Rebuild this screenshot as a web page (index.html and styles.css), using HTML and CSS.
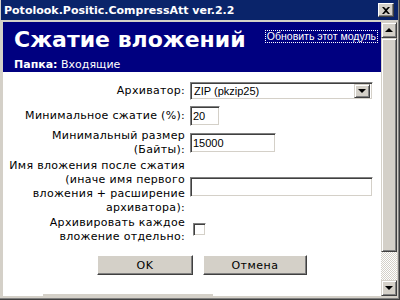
FILE: index.html
```html
<!DOCTYPE html>
<html>
<head>
    <title>Potolook.Positic.CompressAtt ver.2.2</title>
    <link rel="stylesheet" href="styles.css">
</head>
<body>
    <div class="window">
        <div class="titlebar">
            <span class="caption">Potolook.Positic.CompressAtt ver.2.2</span>
            <span class="close-btn">
                <svg width="8" height="7" viewBox="0 0 8 7"><path d="M0 0h2l2 2 2-2h2L5 3.5 8 7H6L4 5 2 7H0l3-3.5z" fill="#000"/></svg>
            </span>
        </div>
        <div class="client">
            <div class="page">
                <div class="header">
                    <div class="header-top">
                        <h1>Сжатие вложений</h1>
                        <a class="update-link" href="#">Обновить этот модуль</a>
                    </div>
                    <div class="folder"><b>Папка:</b> Входящие</div>
                </div>

                <form class="settings">
                    <label for="archiver">Архиватор:</label>
                    <div class="cell">
                        <div class="combo">
                            <select id="archiver">
                                <option>ZIP (pkzip25)</option>
                            </select>
                            <span class="combo-btn"><span class="arrow-down"></span></span>
                        </div>
                    </div>

                    <label for="minRatio">Минимальное сжатие (%):</label>
                    <div class="cell"><input type="text" id="minRatio" class="field field-tiny" value="20"></div>

                    <label for="minSize">Минимальный размер<br>(Байты):</label>
                    <div class="cell"><input type="text" id="minSize" class="field field-short" value="15000"></div>

                    <label for="attName">Имя вложения после сжатия<br>(иначе имя первого<br>вложения + расширение<br>архиватора):</label>
                    <div class="cell"><input type="text" id="attName" class="field field-long" value=""></div>

                    <label for="separate">Архивировать каждое<br>вложение отдельно:</label>
                    <div class="cell"><input type="checkbox" id="separate" class="check"></div>
                </form>

                <div class="actions">
                    <button class="btn">OK</button>
                    <button class="btn btn-wide">Отмена</button>
                </div>
                <div class="footer-line"></div>
            </div>

            <div class="scrollbar">
                <span class="sb-btn"><span class="arrow-up"></span></span>
                <span class="sb-thumb"></span>
                <span class="sb-track"></span>
                <span class="sb-btn"><span class="arrow-down"></span></span>
            </div>
        </div>
    </div>
</body>
</html>
```

FILE: styles.css
```css
body {
    margin: 0;
    font-family: "DejaVu Sans", Verdana, sans-serif;
    font-size: 11px;
}
.window {
    width: 400px;
    height: 300px;
    box-sizing: border-box;
    background-color: #d4d0c8;
    border-right: 1px solid #404040;
    border-bottom: 1px solid #404040;
    box-shadow: inset -1px -1px #808080;
    display: flex;
    flex-direction: column;
}
.titlebar {
    height: 20px;
    margin: 0 1px 0 1px;
    background-color: #0a246a;
    display: flex;
    align-items: center;
    justify-content: space-between;
    padding: 0 4px 0 3px;
}
.caption {
    color: #fff;
    font-family: "DejaVu Sans", Verdana, sans-serif;
    font-weight: bold;
    font-size: 11px;
}
.close-btn {
    width: 16px;
    height: 14px;
    box-sizing: border-box;
    background-color: #d4d0c8;
    border: 1px solid;
    border-color: #fff #404040 #404040 #fff;
    box-shadow: inset -1px -1px #808080;
    display: flex;
    align-items: center;
    justify-content: center;
}
.client {
    flex: 1;
    margin: 2px 2px 3px 3px;
    display: flex;
    overflow: hidden;
}
.page {
    flex: 1;
    background-color: #fff;
    overflow: hidden;
}
.header {
    background-color: #000080;
    color: #fff;
    height: 50px;
    padding: 4px 4px 0 11px;
    box-sizing: border-box;
}
.header-top {
    display: flex;
    justify-content: space-between;
    align-items: flex-start;
}
h1 {
    margin: 0;
    font-size: 22px;
    line-height: 28px;
    font-weight: bold;
    white-space: nowrap;
}
.update-link {
    color: #fff;
    text-decoration: none;
    font-family: "Liberation Sans", Arial, sans-serif;
    font-size: 10.5px;
    line-height: 11px;
    margin-top: 5px;
    outline: 1px dotted #fff;
    padding: 0 1px;
    white-space: nowrap;
}
.folder {
    margin-top: 4px;
    line-height: 14px;
}
.settings {
    margin-top: 6px;
    display: grid;
    grid-template-columns: 182px auto;
    grid-template-rows: 26px 24px 30px 58px 28px;
    column-gap: 5px;
}
.settings label {
    text-align: right;
    line-height: 14px;
    align-self: center;
    letter-spacing: 0.3px;
    white-space: nowrap;
}
.cell {
    display: flex;
    align-items: center;
}
.combo {
    width: 183px;
    height: 18px;
    box-sizing: border-box;
    border: 1px solid;
    border-color: #808080 #fff #fff #808080;
    box-shadow: inset 1px 1px #404040, inset -1px -1px #d4d0c8;
    display: flex;
    align-items: center;
    padding: 1px 2px 1px 1px;
    background-color: #fff;
}
.combo select {
    flex: 1;
    appearance: none;
    border: none;
    background: transparent;
    font-family: "Liberation Sans", Arial, sans-serif;
    font-size: 11px;
    padding: 0 2px;
    outline: none;
}
.combo-btn,
.sb-btn {
    box-sizing: border-box;
    background-color: #d4d0c8;
    border: 1px solid;
    border-color: #d4d0c8 #404040 #404040 #d4d0c8;
    box-shadow: inset 1px 1px #fff, inset -1px -1px #808080;
    display: flex;
    align-items: center;
    justify-content: center;
}
.combo-btn {
    width: 16px;
    height: 14px;
}
.arrow-down,
.arrow-up {
    width: 0;
    height: 0;
    border-left: 4px solid transparent;
    border-right: 4px solid transparent;
}
.arrow-down {
    border-top: 4px solid #000;
}
.arrow-up {
    border-bottom: 4px solid #000;
}
.field,
.check {
    box-sizing: border-box;
    height: 20px;
    border: 1px solid;
    border-color: #808080 #fff #fff #808080;
    box-shadow: inset 1px 1px #404040, inset -1px -1px #d4d0c8;
    background-color: #fff;
    font-family: "Liberation Sans", Arial, sans-serif;
    font-size: 11px;
    padding: 0 2px;
    margin: 0;
    outline: none;
}
.field-tiny {
    width: 30px;
}
.field-short {
    width: 86px;
}
.field-long {
    width: 183px;
}
.check {
    appearance: none;
    width: 13px;
    height: 13px;
    margin-left: 3px;
    margin-top: -1px;
}
.actions {
    margin-top: 11px;
    padding-left: 94px;
    display: flex;
    gap: 10px;
}
.btn {
    width: 96px;
    height: 20px;
    box-sizing: border-box;
    background-color: #d4d0c8;
    border: 1px solid;
    border-color: #fff #404040 #404040 #fff;
    box-shadow: inset -1px -1px #808080;
    font-family: "DejaVu Sans", Verdana, sans-serif;
    font-size: 11px;
    letter-spacing: 0.5px;
    color: #000;
    padding: 0;
}
.btn-wide {
    width: 104px;
}
.footer-line {
    margin: 19px 0 0 40px;
    width: 170px;
    border-top: 2px solid #d4d0c8;
}
.scrollbar {
    width: 16px;
    display: flex;
    flex-direction: column;
    background-image: conic-gradient(#d4d0c8 25%, #fff 0 50%, #d4d0c8 0 75%, #fff 0);
    background-size: 2px 2px;
}
.sb-btn {
    height: 16px;
}
.sb-thumb {
    height: 214px;
    background-color: #d4d0c8;
    box-sizing: border-box;
    border: 1px solid;
    border-color: #d4d0c8 #404040 #404040 #d4d0c8;
    box-shadow: inset 1px 1px #fff, inset -1px -1px #808080;
}
.sb-track {
    flex: 1;
}
```
